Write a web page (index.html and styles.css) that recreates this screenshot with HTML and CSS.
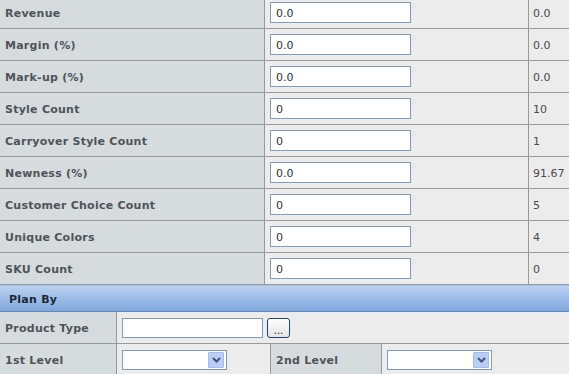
FILE: index.html
```html
<!DOCTYPE html>
<html lang="en">
<head>
  <meta charset="UTF-8" />
  <title>Plan Metrics</title>
  <link rel="stylesheet" href="styles.css">
</head>
<body>

  <!-- === METRICS === -->
  <div class="metrics">
    <div class="row">
      <div class="label">Revenue</div>
      <div class="field"><input class="text-input" type="text" value="0.0"></div>
      <div class="value">0.0</div>
    </div>
    <div class="row">
      <div class="label">Margin (%)</div>
      <div class="field"><input class="text-input" type="text" value="0.0"></div>
      <div class="value">0.0</div>
    </div>
    <div class="row">
      <div class="label">Mark-up (%)</div>
      <div class="field"><input class="text-input" type="text" value="0.0"></div>
      <div class="value">0.0</div>
    </div>
    <div class="row">
      <div class="label">Style Count</div>
      <div class="field"><input class="text-input" type="text" value="0"></div>
      <div class="value">10</div>
    </div>
    <div class="row">
      <div class="label">Carryover Style Count</div>
      <div class="field"><input class="text-input" type="text" value="0"></div>
      <div class="value">1</div>
    </div>
    <div class="row">
      <div class="label">Newness (%)</div>
      <div class="field"><input class="text-input" type="text" value="0.0"></div>
      <div class="value">91.67</div>
    </div>
    <div class="row">
      <div class="label">Customer Choice Count</div>
      <div class="field"><input class="text-input" type="text" value="0"></div>
      <div class="value">5</div>
    </div>
    <div class="row">
      <div class="label">Unique Colors</div>
      <div class="field"><input class="text-input" type="text" value="0"></div>
      <div class="value">4</div>
    </div>
    <div class="row">
      <div class="label">SKU Count</div>
      <div class="field"><input class="text-input" type="text" value="0"></div>
      <div class="value">0</div>
    </div>
  </div>

  <!-- === PLAN BY === -->
  <div class="section-header">Plan By</div>

  <div class="plan-by">
    <div class="plan-row plan-row-wide">
      <div class="label">Product Type</div>
      <div class="field">
        <input class="text-input product-input" type="text" value="">
        <button class="lookup-btn">...</button>
      </div>
    </div>
    <div class="plan-row">
      <div class="label">1st Level</div>
      <div class="field">
        <div class="select">
          <span class="select-arrow">
            <svg width="9" height="6" viewBox="0 0 9 6"><path d="M1 1 L4.5 4.5 L8 1" fill="none" stroke="#3b5584" stroke-width="2"/></svg>
          </span>
        </div>
      </div>
      <div class="label">2nd Level</div>
      <div class="field">
        <div class="select">
          <span class="select-arrow">
            <svg width="9" height="6" viewBox="0 0 9 6"><path d="M1 1 L4.5 4.5 L8 1" fill="none" stroke="#3b5584" stroke-width="2"/></svg>
          </span>
        </div>
      </div>
    </div>
  </div>

</body>
</html>
```

FILE: styles.css
```css
* {
  margin: 0;
  padding: 0;
  box-sizing: border-box;
}

body {
  font-family: Verdana, "DejaVu Sans", sans-serif;
  font-size: 11px;
  background: #ececec;
  color: #444;
  overflow: hidden;
}

/* === METRICS === */
.metrics {
  margin-top: -3px;
}

.row {
  display: grid;
  grid-template-columns: 265px 264px 1fr;
  height: 32px;
  border-bottom: 1px solid #999;
}

.label {
  background: #d6dbde;
  color: #4f5459;
  font-weight: bold;
  letter-spacing: 0.25px;
  display: flex;
  align-items: center;
  padding: 1px 0 0 5px;
  border-right: 1px solid #999;
  white-space: nowrap;
}

.field {
  display: flex;
  align-items: center;
  padding-left: 5px;
  border-right: 1px solid #999;
}

.value {
  display: flex;
  align-items: center;
  padding: 1px 0 0 4px;
  color: #4a4a4a;
}

.text-input {
  width: 141px;
  height: 21px;
  border: 1px solid #7f9db9;
  background: #fff;
  font-family: Verdana, "DejaVu Sans", sans-serif;
  font-size: 11px;
  color: #333;
  padding: 1px 0 0 5px;
  outline: none;
}

/* === PLAN BY === */
.section-header {
  height: 27px;
  background: linear-gradient(#bad1f0, #80a8dd);
  border-top: 1px solid #a9c4ea;
  border-bottom: 1px solid #5f86bd;
  color: #1d2733;
  font-weight: bold;
  letter-spacing: 0.25px;
  padding: 1px 0 0 9px;
  display: flex;
  align-items: center;
}

.plan-row {
  display: grid;
  grid-template-columns: 117px 154px 111px 1fr;
  height: 32px;
  border-bottom: 1px solid #999;
}

.plan-row-wide {
  grid-template-columns: 117px 1fr;
}

.plan-row .field:last-child {
  border-right: none;
}

.product-input {
  height: 20px;
}

.lookup-btn {
  width: 23px;
  height: 20px;
  margin-left: 4px;
  border: 1px solid #1f4673;
  border-radius: 3px;
  background: linear-gradient(#ffffff, #e4e4e4);
  font-family: Verdana, "DejaVu Sans", sans-serif;
  font-size: 10px;
  color: #222;
  line-height: 18px;
  padding: 3px 0 0;
}

.select {
  width: 105px;
  height: 20px;
  border: 1px solid #7f9db9;
  background: #fff;
  display: flex;
  justify-content: flex-end;
  align-items: center;
  padding-right: 2px;
}

.select-arrow {
  width: 16px;
  height: 16px;
  background: #b9cdf6;
  border: 1px solid #a6bbe8;
  border-radius: 1px;
  display: flex;
  align-items: center;
  justify-content: center;
}
```
